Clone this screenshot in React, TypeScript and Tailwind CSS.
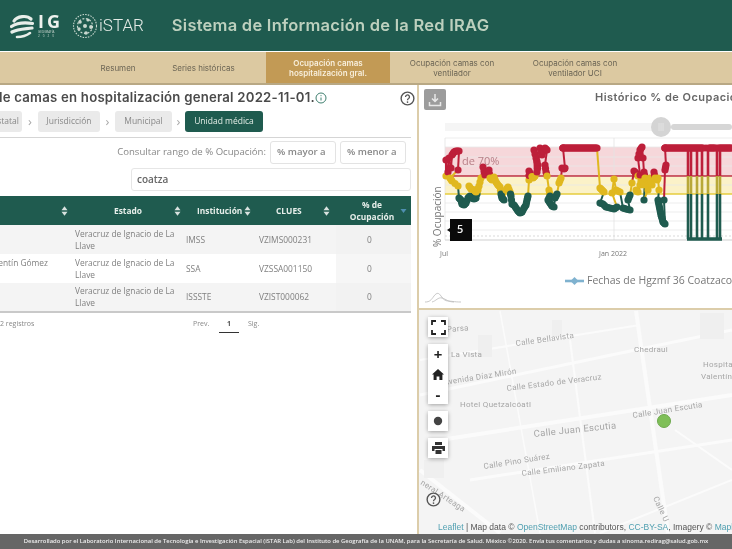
import React from "react";

const NAVY = "#1f5b4f";

type Pt = [number, number];

const flat = (from: number, to: number, y: number, step = 2): Pt[] => {
  const out: Pt[] = [];
  for (let x = from; x <= to; x += step) out.push([x, y]);
  return out;
};

const raw: Pt[] = [
  [446, 176], [446, 160], [448, 172], [449, 158], [451, 168], [452, 155], [454, 152], [456, 151], [459, 151], [458, 170],
  [450, 178], [452, 181], [458, 186], [459, 198], [461, 200], [462, 204], [464, 205], [466, 203], [468, 198], [470, 196],
  [472, 198], [474, 199], [476, 198], [478, 190], [469, 186], [471, 189], [474, 190], [476, 192], [479, 186], [481, 178],
  [483, 167], [485, 175], [487, 172], [489, 170], [490, 178], [492, 180], [494, 177], [496, 182], [498, 185], [500, 187],
  [501, 194], [502, 198], [504, 200], [506, 190], [508, 187], [510, 192], [511, 196], [512, 204], [514, 205], [516, 208],
  [518, 211], [520, 213], [522, 212], [524, 208], [526, 205], [527, 200], [528, 196], [529, 180], [529, 171], [531, 175],
  [533, 178], [535, 176], [534, 150], [536, 158], [538, 165], [537, 172], [540, 148], [542, 155], [545, 148], [547, 150],
  [545, 165], [546, 172], [547, 176], [549, 190], [550, 196], [548, 200], [550, 203], [552, 206], [554, 207], [555, 198],
  [557, 194], [559, 183], [561, 178], [562, 168], [564, 169], [565, 168], [563, 148],
  ...flat(563, 598, 148),
  [600, 188], [602, 190], [604, 192], [600, 203], [603, 204], [606, 207], [610, 208], [614, 209], [617, 207], [612, 193],
  [614, 179], [616, 190], [620, 192], [623, 208], [626, 209], [630, 210], [628, 200], [630, 195], [632, 183], [634, 171],
  [636, 173], [638, 176], [640, 185], [642, 178], [644, 185], [636, 190], [638, 192], [640, 175], [638, 158], [640, 150],
  [642, 147], [643, 158], [644, 172], [645, 178], [644, 200], [648, 190], [648, 180], [650, 178], [652, 185], [654, 172],
  [655, 178], [657, 180], [658, 178], [659, 190], [658, 200], [659, 205], [660, 210], [661, 215], [662, 218], [663, 222],
  [665, 224], [664, 200], [665, 170], [666, 165], [665, 148],
  ...flat(665, 703, 148),
  ...flat(709, 716, 148),
  ...flat(719, 732, 148),
];

// puntos intermedios para que la serie se vea tan densa como en la original
const series: Pt[] = raw.flatMap(([x, y], i) => {
  const next = raw[i + 1];
  if (!next) return [[x, y] as Pt];
  const dist = Math.hypot(next[0] - x, next[1] - y);
  if (dist > 9) return [[x, y] as Pt];
  return [[x, y] as Pt, [(x + next[0]) / 2, (y + next[1]) / 2] as Pt];
});

const colorFor = (y: number) => (y < 176 ? "#bd1f3a" : y < 194 ? "#e0b81f" : "#1f5b4f");

const stripes = [688, 691, 697, 702, 708, 717, 720];

const SortIcon = ({ active }: { active?: boolean }) =>
  active ? (
    <svg width="7" height="9" viewBox="0 0 7 9" className="shrink-0">
      <path d="M0.5 3h6l-3 4z" fill="#4f8fb0" />
    </svg>
  ) : (
    <svg width="7" height="10" viewBox="0 0 7 10" className="shrink-0">
      <path d="M0.5 4.2h6l-3-4z M0.5 5.8h6l-3 4z" fill="#d8e2df" />
    </svg>
  );

const Help = ({ size = 15 }: { size?: number }) => (
  <svg width={size} height={size} viewBox="0 0 16 16" fill="none" className="shrink-0">
    <circle cx="8" cy="8" r="6.8" stroke="#555" strokeWidth="1.5" />
    <path d="M5.9 6.3a2.1 2.1 0 1 1 3.3 1.7c-.8.5-1.2 1-1.2 1.8" stroke="#555" strokeWidth="1.4" />
    <circle cx="8" cy="11.8" r=".9" fill="#555" />
  </svg>
);

const Chevron = ({ w }: { w: string }) => (
  <span className={`flex items-center justify-center text-[13px] leading-none text-[#aaa] ${w}`}>›</span>
);

const rows = [
  { name: "", inst: "IMSS", clues: "VZIMS000231", bg: "bg-[#f4f4f4]" },
  { name: "Valentín Gómez", inst: "SSA", clues: "VZSSA001150", bg: "bg-white" },
  { name: "", inst: "ISSSTE", clues: "VZIST000062", bg: "bg-[#f4f4f4]" },
];

const MapLabel = ({ x, y, r, size = 8, children }: { x: number; y: number; r: number; size?: number; children: string }) => (
  <text x={x} y={y} fontSize={size} fill="#a6a6a6" transform={`rotate(${r} ${x} ${y})`} fontFamily="Roboto, sans-serif" letterSpacing=".3">
    {children}
  </text>
);

const MapButton = ({ children }: { children: React.ReactNode }) => (
  <div className="flex h-[20px] w-[20px] items-center justify-center bg-white">{children}</div>
);

export default function App() {
  return (
    <div className="flex h-[549px] w-[732px] flex-col overflow-hidden bg-white font-['Open_Sans',sans-serif] blur-[0.45px]">
      {/* encabezado */}
      <header className="flex h-[51px] shrink-0 items-center bg-[#1f5b4f] pl-[10px]">
        <svg width="24" height="26" viewBox="0 0 24 26" className="shrink-0" fill="none" stroke="#e8eee9" strokeLinecap="round">
          <path d="M4 8c3-5 13-6 17-2" strokeWidth="3.2" />
          <path d="M1.5 13.5c6-4 14-4 21-3" strokeWidth="3.2" />
          <path d="M2 19c6-3 14-3 20-4" strokeWidth="3.2" />
          <path d="M7 24c4 0 9-1 13-4" strokeWidth="2.6" />
        </svg>
        <div className="ml-[4px] flex w-[24px] flex-col items-start">
          <span className="text-[18px] leading-[17px] font-bold tracking-[3px] text-[#eef2ee]">IG</span>
          <span className="text-[3px] leading-[4px] whitespace-nowrap text-[#cfdad3]">GEOGRAFÍA</span>
          <span className="text-[3px] leading-[4px] tracking-[3px] text-[#cfdad3]">2020</span>
        </div>
        <svg width="26" height="26" viewBox="0 0 26 26" className="ml-[10px] shrink-0" fill="#c9d8cf">
          <circle cx="13" cy="13" r="11.5" fill="none" stroke="#c9d8cf" strokeWidth="1.1" strokeDasharray="1.5 1.2" />
          <circle cx="13" cy="13" r="7.5" fill="none" stroke="#c9d8cf" strokeWidth="1.2" strokeDasharray="2 1.6" />
          <circle cx="8" cy="9" r="1.8" />
          <circle cx="16" cy="7" r="1.6" />
          <circle cx="19" cy="14" r="1.9" />
          <circle cx="13" cy="13" r="2" />
          <circle cx="7" cy="16" r="1.7" />
          <circle cx="14" cy="20" r="1.8" />
        </svg>
        <span className="ml-[1px] font-['Roboto',sans-serif] text-[17px] font-light text-[#e4ebe6]">iSTAR</span>
        <span className="ml-[28px] whitespace-nowrap font-['Inter',sans-serif] text-[16.5px] font-semibold tracking-[0.25px] text-[#bdd0be]">
          Sistema de Información de la Red IRAG
        </span>
      </header>

      {/* pestañas */}
      <nav className="mt-[1px] flex h-[33px] shrink-0 border-b-2 border-[#b8a884] bg-[#dcc9a1] font-['Inter',sans-serif] text-[8px] leading-[10px] text-[#6b6555]">
        <div className="w-[84px]" />
        <div className="flex w-[68px] items-center justify-center">Resumen</div>
        <div className="flex w-[104px] items-center justify-center pr-[1px]">Series históricas</div>
        <div className="w-[10px]" />
        <div className="flex w-[124px] items-center justify-center bg-[#c29a55] text-center font-semibold text-[#f8efdc]">
          Ocupación camas
          <br />
          hospitalización gral.
        </div>
        <div className="flex w-[124px] items-center justify-center text-center">
          Ocupación camas con
          <br />
          ventilador
        </div>
        <div className="flex w-[122px] items-center justify-center text-center">
          Ocupación camas con
          <br />
          ventilador UCI
        </div>
      </nav>

      <main className="flex min-h-0 flex-1">
        {/* panel izquierdo */}
        <section className="flex w-[419px] shrink-0 flex-col overflow-hidden border-r-2 border-[#dccdaa]">
          <div className="flex h-[26px] items-center justify-end pr-[2px]">
            <h1 className="whitespace-nowrap font-['Inter',sans-serif] text-[13.2px] font-semibold tracking-[0.22px] text-[#4a4a4a]">
              Porcentaje de ocupación de camas en hospitalización general 2022-11-01.
            </h1>
            <svg width="12" height="12" viewBox="0 0 12 12" fill="none" className="ml-[0px] mr-[73px] shrink-0" stroke="#3f7f70">
              <circle cx="6" cy="6" r="5" />
              <path d="M6 5.5v3M6 3.2v1" />
            </svg>
            <Help />
          </div>
          <div className="flex h-[21px] items-center justify-start whitespace-nowrap text-[8.5px] text-[#888]">
            <div className="flex h-[21px] w-[22px] shrink-0 items-center justify-end overflow-hidden rounded-r-[3px] bg-[#eaeaea] pr-[3px]">Estatal</div>
            <Chevron w="w-[16px]" />
            <div className="flex h-[21px] w-[62px] items-center justify-center rounded-[3px] bg-[#eaeaea]">Jurisdicción</div>
            <Chevron w="w-[15px]" />
            <div className="flex h-[21px] w-[57px] items-center justify-center rounded-[3px] bg-[#eaeaea]">Municipal</div>
            <Chevron w="w-[13px]" />
            <div className="flex h-[21px] w-[78px] items-center justify-center rounded-[3px] bg-[#1f5b4f] text-[#e3ece6]">Unidad médica</div>
          </div>
          <div className="mt-[5px] h-px w-[411px] shrink-0 bg-[#d5d5d5]" />
          <div className="mt-[3px] flex h-[23px] items-center justify-end pr-[11px] text-[9.6px] text-[#888]">
            <span className="mr-[4px]">Consultar rango de % Ocupación:</span>
            <div className="flex h-[23px] w-[66px] items-center rounded-[3px] border border-[#e3e3e3] pl-[6px] font-semibold">% mayor a</div>
            <div className="ml-[4px] flex h-[23px] w-[66px] items-center rounded-[3px] border border-[#e3e3e3] pl-[6px] font-semibold">% menor a</div>
          </div>
          <div className="ml-[131px] mt-[4px] flex h-[23px] w-[280px] items-center rounded-[3px] border border-[#e6e6e6] pl-[5px] text-[10px] font-semibold text-[#666]">
            coatza
          </div>

          <table className="mt-[5px] w-[411px] table-fixed border-b-2 border-[#c9c9c9] text-[8.4px] leading-[12px] text-[#808080]">
            <colgroup>
              <col className="w-[71px]" />
              <col className="w-[112px]" />
              <col className="w-[72px]" />
              <col className="w-[81px]" />
              <col className="w-[75px]" />
            </colgroup>
            <thead>
              <tr className="h-[29px] bg-[#1f5b4f] font-semibold text-[#e6eeea]">
                <th className="pr-[3px]">
                  <div className="flex justify-end">
                    <SortIcon />
                  </div>
                </th>
                <th className="pr-[1px]">
                  <div className="flex items-center justify-between pl-[43px] pr-[1px]">
                    Estado
                    <SortIcon />
                  </div>
                </th>
                <th>
                  <div className="flex items-center justify-between pl-[14px] pr-[4px]">
                    Institución
                    <SortIcon />
                  </div>
                </th>
                <th>
                  <div className="flex items-center justify-between pl-[21px] pr-[6px]">
                    CLUES
                    <SortIcon />
                  </div>
                </th>
                <th>
                  <div className="flex items-center pl-[8px] pr-[4px]">
                    <span className="flex-1 text-center leading-[12px]">
                      % de
                      <br />
                      Ocupación
                    </span>
                    <SortIcon active />
                  </div>
                </th>
              </tr>
            </thead>
            <tbody>
              {rows.map((r) => (
                <tr key={r.clues} className={`h-[29px] ${r.bg}`}>
                  <td className="align-top pt-[3px]">
                    <div className="flex justify-end whitespace-nowrap pr-[23px]">{r.name}</div>
                  </td>
                  <td className="pl-[4px] pr-[2px]">Veracruz de Ignacio de La Llave</td>
                  <td className="pl-[3px]">{r.inst}</td>
                  <td className="pl-[4px]">{r.clues}</td>
                  <td className="bg-[#f0f0f0]/60 pr-[8px] text-center">0</td>
                </tr>
              ))}
            </tbody>
          </table>

          <div className="mt-[4px] flex w-[411px] text-[7px] text-[#888]">
            <span className="mt-[2px] w-[193px] whitespace-nowrap">2 registros</span>
            <span className="mt-[2px] w-[26px]">Prev.</span>
            <span className="flex h-[16px] w-[20px] items-center justify-center border-b border-[#333] font-bold text-[#555]">1</span>
            <span className="ml-[9px] mt-[2px]">Sig.</span>
          </div>
        </section>

        {/* panel derecho */}
        <section className="flex min-w-0 flex-1 flex-col">
          <div className="flex h-[225px] shrink-0 flex-col overflow-hidden border-b-2 border-[#dccdaa]">
            <div className="flex h-[30px] shrink-0 items-start pl-[5px] pt-[4px]">
              <div className="flex h-[21px] w-[22px] shrink-0 items-center justify-center rounded-[2px] bg-[#9c9c9c]">
                <svg width="14" height="14" viewBox="0 0 14 14" fill="none" stroke="#e8e8e8" strokeWidth="1.5">
                  <path d="M7 1v7M4 5.5 7 8.5l3-3M1.5 9v3.5h11V9" />
                </svg>
              </div>
              <h2 className="ml-[149px] whitespace-nowrap font-['Inter',sans-serif] text-[11px] leading-[16px] font-semibold tracking-[0.45px] text-[#666]">
                Histórico % de Ocupación de camas
              </h2>
            </div>
            <svg viewBox="419 115 313 150" className="h-[150px] w-[313px] shrink-0" fontFamily="Open Sans, sans-serif">
              {/* rango */}
              <rect x="445" y="123" width="216" height="8" fill="#f5f5f5" />
              <rect x="671" y="124" width="61" height="6" rx="3" fill="#d6d6d6" />
              <circle cx="661" cy="127" r="10" fill="#d4d4d4" />
              <path d="M659 123v8M661 123v8M663 123v8" stroke="#e3e3e3" />
              {/* bandas y rejilla */}
              <rect x="445" y="147" width="287" height="29" fill="#f6d7da" />
              <rect x="445" y="177" width="287" height="17" fill="#fbf2c8" />
              <path d="M445 138H732M445 147H732M445 157H732M445 166H732M445 185H732M445 203H732M445 212H732M445 221H732M445 230H732" stroke="#e9e9e9" strokeWidth=".8" />
              <path d="M445 138V240M614 138V240" stroke="#e3e3e3" strokeWidth=".8" />
              <path d="M445 236H732" stroke="#cfcfcf" strokeWidth=".8" strokeDasharray="2 2" />
              <path d="M445 240H732" stroke="#cfcfcf" />
              <text x="462" y="165" fontSize="11" fill="#b78088">de 70%</text>
              <path d="M445 176H732" stroke="#bd2f3c" strokeWidth="1.4" />
              <path d="M445 194H732" stroke="#e6cc3e" strokeWidth="1.4" />
              {/* datos */}
              {stripes.map((x) => (
                <g key={x} strokeWidth="2.6">
                  <path d={`M${x} 149V176`} stroke="#bd1f3a" />
                  <path d={`M${x} 176V194`} stroke="#b8a838" />
                  <path d={`M${x} 194V239`} stroke="#1f5b4f" />
                </g>
              ))}
              <path d="M687 239H722" stroke={NAVY} strokeWidth="3.4" />
              {series.slice(1).map(([x, y], i) => (
                <line key={i} x1={series[i][0]} y1={series[i][1]} x2={x} y2={y} stroke={colorFor(y)} strokeWidth="2" />
              ))}
              {series.map(([x, y], i) => (
                <circle key={i} cx={x} cy={y} r="3.6" fill={colorFor(y)} />
              ))}
              {/* tooltip */}
              <path d="M450 219h22v22h-22v-9l-3-2 3-2z" fill="#0a0a0a" />
              <text x="457" y="233" fontSize="11" fill="#f2f2f2" fontWeight="600">5</text>
              <text x="0" y="0" fontSize="10" fill="#777" transform="translate(441 247) rotate(-90)">% Ocupación</text>
              <text x="440" y="256" fontSize="7" fill="#777">Jul</text>
              <text x="599" y="256" fontSize="7" fill="#777">Jan 2022</text>
            </svg>
            <div className="mt-[9px] flex h-[14px] shrink-0 items-center pl-[146px] text-[10.5px] whitespace-nowrap text-[#777]">
              <svg width="20" height="8" viewBox="0 0 20 8" className="mr-[2px] shrink-0">
                <path d="M0 4H19" stroke="#7fb2cf" strokeWidth="2.6" />
                <path d="M9.5 0 13.5 4 9.5 8 5.5 4z" fill="#7fb2cf" />
              </svg>
              Fechas de Hgzmf 36 Coatzacoalcos
            </div>
            <svg width="38" height="14" viewBox="0 0 38 14" className="ml-[5px] mt-[2px] shrink-0" fill="none" stroke="#bbb" strokeWidth=".8">
              <path d="M1 12c5 0 6-2 9-6s5-3 7 0 4 5 7 5 6 1 13 1" />
              <path d="M8 12c4-1 6-5 10-4s6 4 12 4" />
            </svg>
          </div>

          {/* mapa */}
          <div className="relative min-h-0 flex-1 overflow-hidden bg-[#f4f4f4]">
            <svg viewBox="419 310 313 224" className="h-full w-full">
              <g stroke="#fbfbfb" strokeWidth="3" fill="none">
                <path d="M420 395 640 349 732 330" />
                <path d="M440 440 732 395" strokeWidth="4" />
                <path d="M470 480 732 440" />
                <path d="M500 311 540 533" strokeWidth="1.5" />
                <path d="M636 311 668 533" strokeWidth="4" />
                <path d="M570 340 595 533" strokeWidth="2" />
                <path d="M420 470 500 533" strokeWidth="4" />
                <path d="M420 360 640 325" strokeWidth="2" />
                <path d="M675 430 732 470M600 533 732 480" strokeWidth="2" />
              </g>
              <g fill="#efefef">
                <rect x="478" y="335" width="14" height="22" />
                <rect x="552" y="320" width="10" height="16" />
                <rect x="700" y="313" width="24" height="26" />
                <rect x="424" y="460" width="20" height="18" />
              </g>
              <MapLabel x={516} y={346} r={-8}>Calle Bellavista</MapLabel>
              <MapLabel x={634} y={352} r={0}>Chedraui</MapLabel>
              <MapLabel x={703} y={367} r={0}>Hospital</MapLabel>
              <MapLabel x={701} y={379} r={0}>Valentín</MapLabel>
              <MapLabel x={447} y={332} r={-4}>Parsa</MapLabel>
              <MapLabel x={451} y={357} r={0}>La Vista</MapLabel>
              <MapLabel x={444} y={385} r={-9}>Avenida Díaz Mirón</MapLabel>
              <MapLabel x={507} y={391} r={-7}>Calle Estado de Veracruz</MapLabel>
              <MapLabel x={460} y={407} r={0}>Hotel Quetzalcóatl</MapLabel>
              <MapLabel x={534} y={437} r={-6} size={9.5}>Calle Juan Escutia</MapLabel>
              <MapLabel x={633} y={418} r={-9}>Calle Juan Escutia</MapLabel>
              <MapLabel x={484} y={469} r={-9}>Calle Pino Suárez</MapLabel>
              <MapLabel x={522} y={476} r={-7}>Calle Emiliano Zapata</MapLabel>
              <MapLabel x={420} y={484} r={33}>neral Arteaga</MapLabel>
              <MapLabel x={653} y={498} r={65}>Calle U</MapLabel>
              <circle cx="664" cy="421" r="6.5" fill="#7fbf58" stroke="#6ea94e" />
            </svg>

            {/* controles del mapa */}
            <div className="absolute left-[9px] top-[7px] flex flex-col gap-[7px]">
              <div className="rounded-[2px] shadow-[0_1px_4px_rgba(0,0,0,.35)]">
                <MapButton>
                  <svg width="15" height="15" viewBox="0 0 15 15" fill="none" stroke="#222" strokeWidth="1.8">
                    <path d="M1 5V1h4M10 1h4v4M14 10v4h-4M5 14H1v-4" />
                  </svg>
                </MapButton>
              </div>
              <div className="rounded-[2px] shadow-[0_1px_4px_rgba(0,0,0,.35)]">
                <MapButton>
                  <span className="text-[15px] leading-none font-bold text-[#222]">+</span>
                </MapButton>
                <MapButton>
                  <svg width="12" height="11" viewBox="0 0 12 11" fill="#222">
                    <path d="M6 0 0 5.5h1.6V11h3V7.5h2.8V11h3V5.5H12z" />
                  </svg>
                </MapButton>
                <MapButton>
                  <span className="text-[15px] leading-none font-bold text-[#222]">-</span>
                </MapButton>
              </div>
              <div className="rounded-[2px] shadow-[0_1px_4px_rgba(0,0,0,.35)]">
                <MapButton>
                  <svg width="10" height="10" viewBox="0 0 10 10">
                    <circle cx="5" cy="5" r="4.2" fill="#444" />
                  </svg>
                </MapButton>
              </div>
              <div className="rounded-[2px] shadow-[0_1px_4px_rgba(0,0,0,.35)]">
                <MapButton>
                  <svg width="13" height="12" viewBox="0 0 13 12" fill="#333">
                    <path d="M3 0h7v3H3zM0 4h13v5h-2.5V7h-8v2H0zM3.5 8h6v4h-6z" />
                  </svg>
                </MapButton>
              </div>
            </div>
            <div className="absolute bottom-[27px] left-[7px]">
              <Help />
            </div>
            <div className="absolute bottom-0 left-[19px] right-0 h-[14px] whitespace-nowrap font-['Liberation_Sans',sans-serif] text-[8.5px] leading-[14px] text-[#555]">
              <span className="text-[#4f9fb0]">Leaflet</span> | Map data © <span className="text-[#4f9fb0]">OpenStreetMap</span> contributors,{" "}
              <span className="text-[#4f9fb0]">CC-BY-SA</span>, Imagery © <span className="text-[#4f9fb0]">Mapbox</span>
            </div>
          </div>
        </section>
      </main>

      <footer className="flex h-[15px] shrink-0 items-center justify-center whitespace-nowrap bg-[#666] text-[5.9px] font-semibold text-[#eee]">
        Desarrollado por el Laboratorio Internacional de Tecnología e Investigación Espacial (iSTAR Lab) del Instituto de Geografía de la UNAM, para la Secretaría de Salud. México ©2020. Envía tus comentarios y dudas a sinoma.redirag@salud.gob.mx
      </footer>
    </div>
  );
}
